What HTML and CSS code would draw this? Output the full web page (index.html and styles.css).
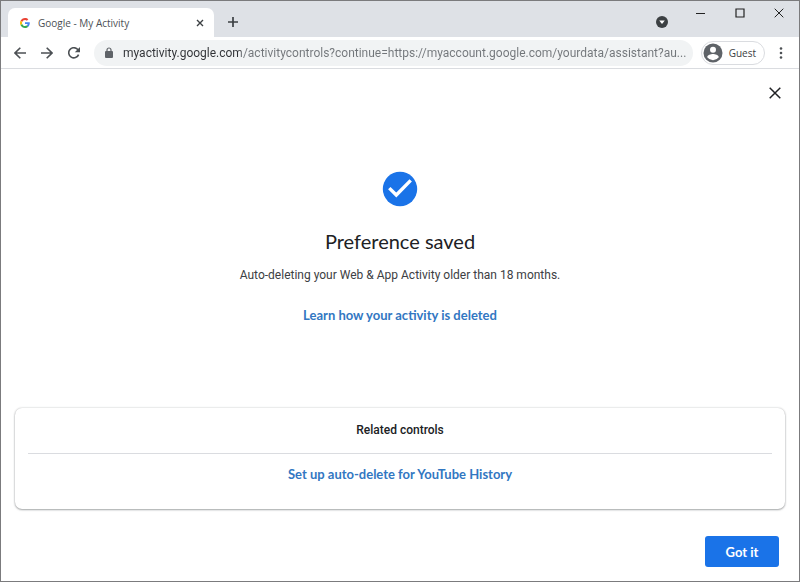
FILE: index.html
```html
<!DOCTYPE html>
<html lang="en">
<head>
<meta charset="utf-8">
<title>Google - My Activity</title>
<link rel="stylesheet" href="styles.css">
</head>
<body>
<div class="window">
  <header class="titlebar">
    <div class="tab">
      <svg class="favicon" viewBox="0 0 48 48" aria-hidden="true">
        <path fill="#EA4335" d="M24 9.5c3.54 0 6.71 1.22 9.21 3.6l6.85-6.85C35.9 2.38 30.47 0 24 0 14.62 0 6.51 5.38 2.56 13.22l7.98 6.19C12.43 13.72 17.74 9.5 24 9.5z"/>
        <path fill="#4285F4" d="M46.98 24.55c0-1.57-.15-3.09-.38-4.55H24v9.02h12.94c-.58 2.96-2.26 5.48-4.78 7.18l7.73 6c4.51-4.18 7.09-10.36 7.09-17.65z"/>
        <path fill="#FBBC05" d="M10.53 28.59c-.48-1.45-.76-2.99-.76-4.59s.27-3.14.76-4.59l-7.98-6.19C.92 16.46 0 20.12 0 24s.92 7.54 2.56 10.78l7.97-6.19z"/>
        <path fill="#34A853" d="M24 48c6.48 0 11.93-2.13 15.89-5.81l-7.73-6c-2.15 1.45-4.92 2.3-8.16 2.3-6.26 0-11.57-4.22-13.47-9.91l-7.98 6.19C6.51 42.62 14.62 48 24 48z"/>
      </svg>
      <span class="tab-title">Google - My Activity</span>
      <button class="icon-button tab-close" aria-label="Close tab">
        <svg width="8" height="8" viewBox="0 0 8 8"><path d="M1 1l6 6M7 1L1 7" stroke="#3c4043" stroke-width="1.4"/></svg>
      </button>
    </div>
    <button class="icon-button new-tab" aria-label="New tab">
      <svg width="12" height="12" viewBox="0 0 12 12"><path d="M6 1v10M1 6h10" stroke="#3c4043" stroke-width="1.7"/></svg>
    </button>
    <div class="window-controls">
      <button class="icon-button tab-search" aria-label="Search tabs">
        <svg width="12" height="12" viewBox="0 0 12 12"><circle cx="6" cy="6" r="6" fill="#3c4043"/><path d="M3.2 4.4h5.6L6 8z" fill="#fff"/></svg>
      </button>
      <button class="icon-button" aria-label="Minimize">
        <svg width="10" height="10" viewBox="0 0 10 10"><path d="M0 5.5h9" stroke="#222"/></svg>
      </button>
      <button class="icon-button" aria-label="Maximize">
        <svg width="10" height="10" viewBox="0 0 10 10"><path d="M1 1h8v8H1z" fill="none" stroke="#222" stroke-width="1.2"/></svg>
      </button>
      <button class="icon-button" aria-label="Close window">
        <svg width="10" height="10" viewBox="0 0 10 10"><path d="M.7.7l8.6 8.6M9.3.7L.7 9.3" stroke="#222"/></svg>
      </button>
    </div>
  </header>

  <nav class="toolbar" aria-label="Browser">
    <div class="nav-buttons">
      <button class="icon-button" aria-label="Back">
        <svg width="12" height="12" viewBox="0 0 12 12"><path d="M12 6H1M6.3.7L1 6l5.3 5.3" fill="none" stroke="#4c5054" stroke-width="1.6"/></svg>
      </button>
      <button class="icon-button" aria-label="Forward">
        <svg width="12" height="12" viewBox="0 0 12 12"><path d="M0 6h11M5.7.7L11 6l-5.3 5.3" fill="none" stroke="#4c5054" stroke-width="1.6"/></svg>
      </button>
      <button class="icon-button" aria-label="Reload">
        <svg width="12" height="12" viewBox="0 0 12 12"><path d="M10.6 7.6A5.1 5.1 0 1 1 9.8 2.6L10.8 3.8" fill="none" stroke="#4c5054" stroke-width="1.6"/><path d="M12 0v5.2H6.8z" fill="#4c5054"/></svg>
      </button>
    </div>
    <div class="address">
      <svg width="8" height="11" viewBox="0 0 8 11" aria-hidden="true"><path d="M2 5V3a2 2 0 0 1 4 0v2" fill="none" stroke="#5f6368" stroke-width="1.2"/><rect y="4" width="8" height="7" rx="1" fill="#5f6368"/></svg>
      <input class="url" type="text" aria-label="Address" value="myactivity.google.com/activitycontrols?continue=https://myaccount.google.com/yourdata/assistant?au...">
    </div>
    <button class="profile">
      <svg width="20" height="20" viewBox="0 0 20 20" aria-hidden="true"><circle cx="10" cy="10" r="9.5" fill="#5f6368"/><circle cx="10" cy="6.8" r="3" fill="#fff"/><path d="M4.2 14.3c0-2.4 3.8-3.4 5.8-3.4s5.8 1 5.8 3.4A7.2 7.2 0 0 1 10 17.2a7.2 7.2 0 0 1-5.8-2.9z" fill="#fff"/></svg>
      <span>Guest</span>
    </button>
    <button class="icon-button menu" aria-label="Menu">
      <svg width="4" height="12" viewBox="0 0 4 12"><g fill="#4c5054"><circle cx="2" cy="1.5" r="1.3"/><circle cx="2" cy="6" r="1.3"/><circle cx="2" cy="10.5" r="1.3"/></g></svg>
    </button>
  </nav>

  <main class="page">
    <div class="dismiss-row">
      <button class="icon-button" aria-label="Close">
        <svg width="12" height="12" viewBox="0 0 12 12"><path d="M.7.7l10.6 10.6M11.3.7L.7 11.3" stroke="#202124" stroke-width="1.5"/></svg>
      </button>
    </div>
    <section class="confirmation">
      <svg width="36" height="36" viewBox="0 0 36 36" aria-hidden="true"><circle cx="18" cy="18" r="17.2" fill="#1a73e8"/><path d="M7.300 17.100l7 6.900L28.700 9.400" fill="none" stroke="#fff" stroke-width="3.400"/></svg>
      <h1>Preference saved</h1>
      <p>Auto-deleting your Web &amp; App Activity older than 18 months.</p>
      <a class="link" href="#learn">Learn how your activity is deleted</a>
    </section>
    <section class="card">
      <h2>Related controls</h2>
      <a class="link" href="#youtube">Set up auto-delete for YouTube History</a>
    </section>
    <footer class="actions">
      <button class="primary">Got it</button>
    </footer>
  </main>
</div>
</body>
</html>
```
FILE: styles.css
```css
* {
  box-sizing: border-box;
}

body {
  margin: 0;
  font-family: Roboto, "Liberation Sans", sans-serif;
  color: #202124;
  background: #fff;
}

button {
  font: inherit;
  border: 0;
  padding: 0;
  background: none;
}

svg {
  display: block;
  flex: none;
}

.window {
  display: flex;
  flex-direction: column;
  min-height: 100vh;
  border: 1px solid #7b7b7d;
}

.icon-button {
  display: flex;
  align-items: center;
  justify-content: center;
  flex: none;
  width: 16px;
  height: 16px;
}

.titlebar {
  display: flex;
  align-items: flex-end;
  height: 36px;
  padding-left: 7px;
  background: #dee1e6;
}

.tab {
  display: flex;
  align-items: center;
  flex: 0 1 206px;
  height: 29px;
  padding: 0 6px 0 12px;
  border-radius: 7px 7px 0 0;
  background: #fff;
}

.favicon {
  width: 10px;
  height: 10px;
}

.tab-title {
  flex: 1;
  margin-left: 8px;
  font-family: "Open Sans", "Noto Sans", sans-serif;
  font-size: 10px;
  color: #4c5054;
  white-space: nowrap;
}

.new-tab {
  margin: 0 0 7px 11px;
}

.window-controls {
  display: flex;
  align-self: flex-start;
  gap: 23px;
  margin-left: auto;
  padding: 4px 12px 0 0;
}

.tab-search {
  margin-top: 9px;
}

.toolbar {
  display: flex;
  align-items: center;
  height: 32px;
  padding: 0 10px 0 11px;
  border-bottom: 1px solid #dadce0;
  background: #fff;
}

.nav-buttons {
  display: flex;
  gap: 11px;
}

.address {
  display: flex;
  align-items: center;
  flex: 1;
  gap: 10px;
  height: 26px;
  margin-left: 12px;
  padding-left: 11px;
  border-radius: 13px;
  background: #f1f3f4;
}

.url {
  flex: 1;
  min-width: 0;
  height: 24px;
  padding: 0;
  border: 0;
  outline: 0;
  font-family: Roboto, "Liberation Sans", sans-serif;
  font-size: 12px;
  color: transparent;
  background: linear-gradient(90deg, #303236 118px, #72767a 118px);
  -webkit-background-clip: text;
  background-clip: text;
}

.profile {
  display: flex;
  align-items: center;
  gap: 6px;
  height: 24px;
  margin-left: 8px;
  padding: 0 8px 0 1px;
  border: 1px solid #dadce0;
  border-radius: 12px;
  font-family: "Open Sans", "Noto Sans", sans-serif;
  font-size: 10px;
  color: #3c4043;
}

.menu {
  margin-left: 8px;
}

.page {
  display: flex;
  flex-direction: column;
  flex: 1;
}

.dismiss-row {
  display: flex;
  justify-content: flex-end;
  padding: 16px 16px 0;
}

.confirmation {
  display: flex;
  flex-direction: column;
  align-items: center;
  padding-top: 70px;
  text-align: center;
}

h1 {
  margin: 18px 0 0;
  font-family: Lato, sans-serif;
  font-size: 20px;
  font-weight: 400;
  line-height: 32px;
}

p {
  margin: 8px 0 0;
  font-size: 12px;
  line-height: 20px;
  color: #3c4043;
}

.confirmation .link {
  margin-top: 20px;
}

.link {
  font-family: Lato, sans-serif;
  font-size: 13px;
  font-weight: 700;
  line-height: 20px;
  color: #3277c2;
  text-decoration: none;
}

.card {
  margin: 83px 14px 0;
  padding: 0 13px 25px;
  border-radius: 7px;
  text-align: center;
  box-shadow: 0 0 2px rgba(60, 64, 67, 0.3), 0 1px 2px rgba(60, 64, 67, 0.4);
}

h2 {
  margin: 0 0 10px;
  border-bottom: 1px solid #dadce0;
  font-size: 12px;
  font-weight: 500;
  line-height: 45px;
}

.actions {
  display: flex;
  justify-content: flex-end;
  margin-top: auto;
  padding: 20px 20px 14px;
}

.primary {
  width: 74px;
  height: 31px;
  border-radius: 3px;
  font-family: Lato, sans-serif;
  font-size: 13px;
  font-weight: 700;
  color: #fff;
  background: #1a73e8;
}
```
